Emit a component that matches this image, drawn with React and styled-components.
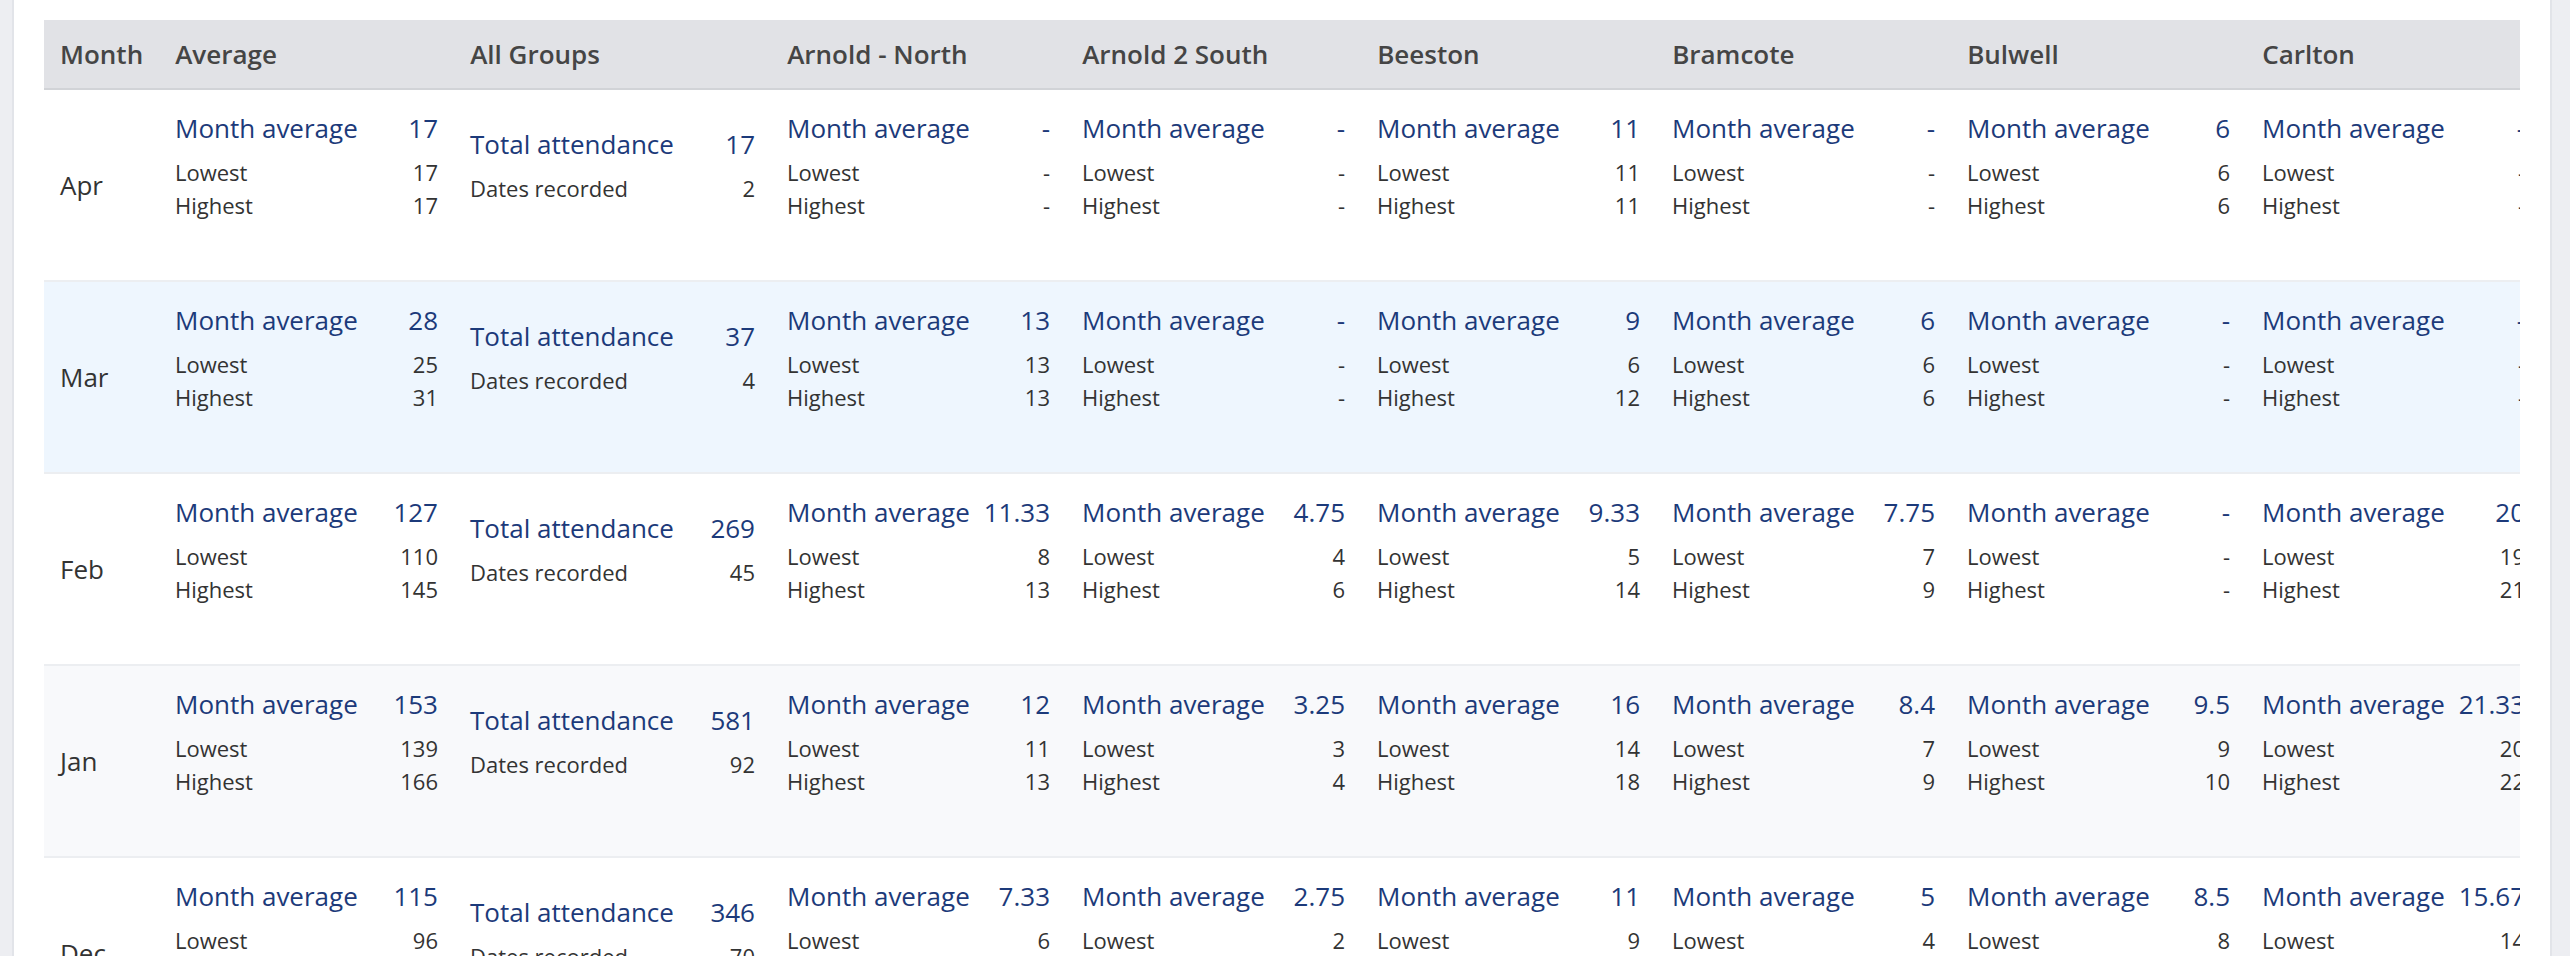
import React from "react";
import styled, { createGlobalStyle } from "styled-components";

const GlobalStyle = createGlobalStyle`
  html, body {
    margin: 0;
    padding: 0;
    background: #edeef2;
    font-family: "Open Sans", "Noto Sans", sans-serif;
  }
`;

const groups = [
  "Arnold - North",
  "Arnold 2 South",
  "Beeston",
  "Bramcote",
  "Bulwell",
  "Carlton",
];

// [month, [avg, low, high], [total, dates], ...groups [avg, low, high]]
const rows = [
  {
    month: "Apr",
    average: ["17", "17", "17"],
    all: ["17", "2"],
    groups: [
      ["-", "-", "-"],
      ["-", "-", "-"],
      ["11", "11", "11"],
      ["-", "-", "-"],
      ["6", "6", "6"],
      ["-", "-", "-"],
    ],
  },
  {
    month: "Mar",
    tone: "hover",
    average: ["28", "25", "31"],
    all: ["37", "4"],
    groups: [
      ["13", "13", "13"],
      ["-", "-", "-"],
      ["9", "6", "12"],
      ["6", "6", "6"],
      ["-", "-", "-"],
      ["-", "-", "-"],
    ],
  },
  {
    month: "Feb",
    average: ["127", "110", "145"],
    all: ["269", "45"],
    groups: [
      ["11.33", "8", "13"],
      ["4.75", "4", "6"],
      ["9.33", "5", "14"],
      ["7.75", "7", "9"],
      ["-", "-", "-"],
      ["20", "19", "21"],
    ],
  },
  {
    month: "Jan",
    tone: "stripe",
    average: ["153", "139", "166"],
    all: ["581", "92"],
    groups: [
      ["12", "11", "13"],
      ["3.25", "3", "4"],
      ["16", "14", "18"],
      ["8.4", "7", "9"],
      ["9.5", "9", "10"],
      ["21.33", "20", "22"],
    ],
  },
  {
    month: "Dec",
    average: ["115", "96", "134"],
    all: ["346", "70"],
    groups: [
      ["7.33", "6", "9"],
      ["2.75", "2", "4"],
      ["11", "9", "13"],
      ["5", "4", "6"],
      ["8.5", "8", "9"],
      ["15.67", "14", "17"],
    ],
  },
];

const tones = {
  hover: "#eef6fe",
  stripe: "#f8f9fb",
};

export default function App() {
  return (
    <>
      <GlobalStyle />
      <Page>
        <Card>
          <TableWrap>
            <Table>
              <HeaderRow>
                <HeadCell $w={115}>Month</HeadCell>
                <HeadCell $w={295}>Average</HeadCell>
                <HeadCell $w={317}>All Groups</HeadCell>
                {groups.map((g) => (
                  <HeadCell key={g} $w={295}>
                    {g}
                  </HeadCell>
                ))}
              </HeaderRow>
              {rows.map((r) => (
                <Row key={r.month} $bg={tones[r.tone] || "#fff"}>
                  <MonthCell $w={115}>{r.month}</MonthCell>
                  <Stats stats={r.average} width={295} />
                  <Cell $w={317}>
                    <Line $main>
                      <span>Total attendance</span>
                      <span>{r.all[0]}</span>
                    </Line>
                    <Line>
                      <span>Dates recorded</span>
                      <span>{r.all[1]}</span>
                    </Line>
                  </Cell>
                  {r.groups.map((s, i) => (
                    <Stats key={i} stats={s} width={295} />
                  ))}
                </Row>
              ))}
            </Table>
          </TableWrap>
        </Card>
      </Page>
    </>
  );
}

function Stats({ stats, width }) {
  return (
    <Cell $w={width}>
      <Line $main>
        <span>Month average</span>
        <span>{stats[0]}</span>
      </Line>
      <Line>
        <span>Lowest</span>
        <span>{stats[1]}</span>
      </Line>
      <Line>
        <span>Highest</span>
        <span>{stats[2]}</span>
      </Line>
    </Cell>
  );
}

const Page = styled.div`
  min-height: 100vh;
  padding: 0 18px 0 12px;
`;

const Card = styled.div`
  background: #fff;
  border-left: 2px solid #e2e4e9;
  border-right: 2px solid #e2e4e9;
  padding: 20px 30px 0;
  min-height: 1100px;
`;

const TableWrap = styled.div`
  overflow: hidden;
`;

const Table = styled.div`
  display: flex;
  flex-direction: column;
  width: max-content;
`;

const HeaderRow = styled.div`
  display: flex;
  align-items: center;
  height: 68px;
  background: #e1e2e6;
  border-bottom: 2px solid #d1d3d7;
`;

const HeadCell = styled.div`
  flex: 0 0 ${(p) => p.$w}px;
  box-sizing: border-box;
  padding: 0 16px;
  font-size: 26px;
  font-weight: 600;
  color: #454545;
  white-space: nowrap;
`;

const Row = styled.div`
  display: flex;
  height: 190px;
  background: ${(p) => p.$bg};
  border-bottom: 2px solid #eceef1;
`;

const MonthCell = styled.div`
  flex: 0 0 ${(p) => p.$w}px;
  box-sizing: border-box;
  display: flex;
  align-items: center;
  padding: 0 16px;
  font-size: 26px;
  color: #333;
`;

const Cell = styled.div`
  flex: 0 0 ${(p) => p.$w}px;
  box-sizing: border-box;
  display: flex;
  flex-direction: column;
  justify-content: center;
  padding: 0 16px 40px;
`;

const Line = styled.div`
  display: flex;
  justify-content: space-between;
  white-space: nowrap;
  font-size: ${(p) => (p.$main ? "26px" : "22px")};
  line-height: ${(p) => (p.$main ? "39px" : "33px")};
  color: ${(p) => (p.$main ? "#1c3a7a" : "#333")};
  margin-bottom: ${(p) => (p.$main ? "8px" : "0")};
`;
